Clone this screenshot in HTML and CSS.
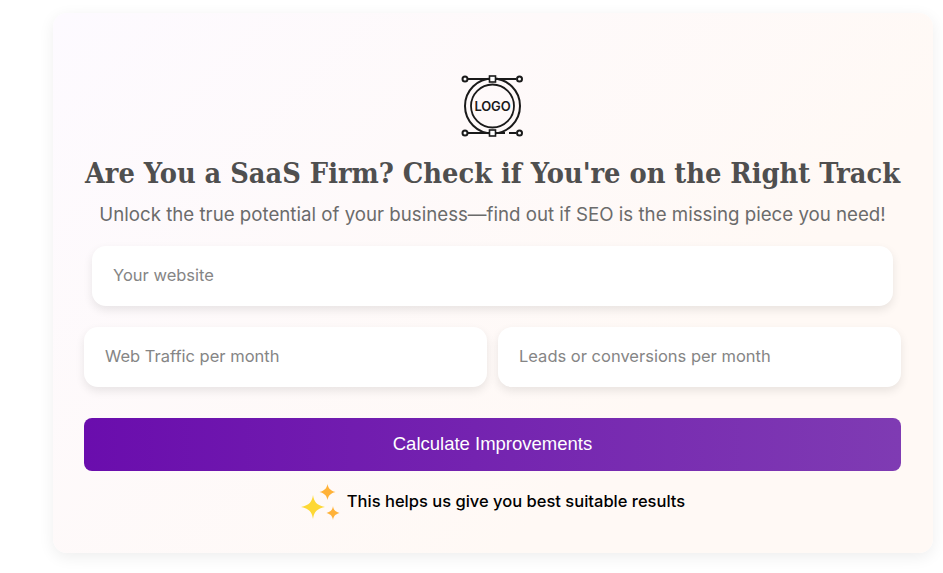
FILE: index.html
```html
<!DOCTYPE html>
<html lang="en">
<head>
<meta charset="utf-8">
<title>SaaS SEO Check</title>
<link rel="stylesheet" href="styles.css">
</head>
<body>
<main class="card">
  <svg class="logo" width="64" height="66" viewBox="0 0 64 66" fill="none" stroke="#1a1a1a" stroke-width="2">
    <circle cx="31.500" cy="33" r="27.500"/>
    <circle cx="31.500" cy="33" r="21.500" stroke-width="1.800"/>
    <path d="M6 6H28M35 6H55M6 60H28M35 60H44M48 60H55"/>
    <circle cx="4" cy="6" r="2.500" fill="#fff"/>
    <circle cx="58.500" cy="6" r="2.500" fill="#fff"/>
    <circle cx="4" cy="60" r="2.500" fill="#fff"/>
    <circle cx="58.500" cy="60" r="2.500" fill="#fff"/>
    <rect x="28.500" y="3" width="6" height="6" fill="#fff" stroke-width="1.600"/>
    <rect x="28.500" y="57" width="6" height="6" fill="#fff" stroke-width="1.600"/>
    <text class="logo-text" x="31.500" y="37.500">LOGO</text>
  </svg>
  <h1 class="title">Are You a SaaS Firm? Check if You're on the Right Track</h1>
  <p class="subtitle">Unlock the true potential of your business—find out if SEO is the missing piece you need!</p>
  <form class="form">
    <input class="field field-wide" type="text" placeholder="Your website">
    <div class="row">
      <input class="field" type="text" placeholder="Web Traffic per month">
      <input class="field" type="text" placeholder="Leads or conversions per month">
    </div>
    <button class="submit" type="button">Calculate Improvements</button>
  </form>
  <div class="hint">
    <svg class="sparkles" width="40" height="40" viewBox="0 0 40 40">
      <path fill="#fdd835" d="M13 14C14 21 16.500 24 25 26C16.500 28 14 31 13 38C12 31 9.500 28 1 26C9.500 24 12 21 13 14Z"/>
      <path fill="#ffb238" d="M27.500 3C28.300 7 30 9.500 35.500 11C30 12.500 28.300 15 27.500 19C26.700 15 25 12.500 19.500 11C25 9.500 26.700 7 27.500 3Z"/>
      <path fill="#ffb238" d="M33 25C33.600 29 35 30.500 39.500 32C35 33.500 33.600 35 33 39C32.400 35 31 33.500 26.500 32C31 30.500 32.400 29 33 25Z"/>
    </svg>
    <span>This helps us give you best suitable results</span>
  </div>
</main>
</body>
</html>
```
FILE: styles.css
```css
* { box-sizing: border-box; }
html, body { margin: 0; background: #fff; }
body { padding: 13px 10px 20px 53px; font-family: "Inter", "Liberation Sans", sans-serif; }
.card {
  height: 540px;
  padding: 60px 32px 0 31px;
  display: flex;
  flex-direction: column;
  align-items: center;
  border-radius: 14px;
  background: linear-gradient(135deg, #fdfaff 0%, #fff9f5 70%, #fff9f5 100%);
  box-shadow: 0 4px 16px rgba(0, 0, 0, 0.07);
}
.logo { display: block; flex: none; }
.logo-text {
  font: 600 13px "Inter", sans-serif;
  letter-spacing: -0.2px;
  text-anchor: middle;
  fill: #1a1a1a;
  stroke: none;
}
.title {
  margin: 14px 0 0;
  font: 700 28.650px/40px "DejaVu Serif Condensed", "DejaVu Serif", serif;
  color: #4f4f4f;
  white-space: nowrap;
}
.subtitle {
  margin: 9px 0 0;
  font-size: 18.700px;
  line-height: 26px;
  font-weight: 400;
  color: #6b6b6b;
  white-space: nowrap;
}
.form { width: 100%; margin-top: 18px; display: flex; flex-direction: column; align-items: stretch; }
.field {
  display: block;
  width: 100%;
  min-width: 0;
  height: 60px;
  padding: 0 21px 2px;
  border: 0;
  border-radius: 14px;
  background: #fff;
  box-shadow: 0 4px 10px rgba(0, 0, 0, 0.09);
  font: 400 16.500px "Inter", sans-serif;
  color: #333;
}
.field::placeholder { color: #858585; opacity: 1; }
.field-wide { width: calc(100% - 16px); margin: 0 8px; }
.row { margin-top: 21px; display: grid; grid-template-columns: 403px 403px; justify-content: space-between; }
.submit {
  margin-top: 31px;
  height: 53px;
  padding: 0 0 2px;
  border: 0;
  border-radius: 8px;
  background: linear-gradient(90deg, #6a0dad 0%, #7f3bb3 100%);
  color: #fff;
  font: 400 18.500px "Liberation Sans", sans-serif;
}
.hint {
  margin-top: 10px;
  display: flex;
  align-items: center;
  gap: 7px;
  font-size: 16.500px;
  font-weight: 500;
  line-height: 40px;
  color: #000;
}
.sparkles { display: block; flex: none; }
```
